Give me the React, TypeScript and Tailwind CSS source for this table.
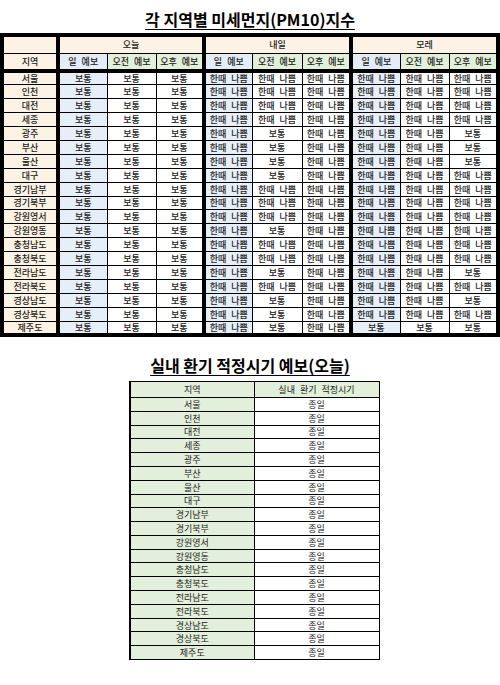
import React from 'react';

// 미세먼지(PM10) 예보 표 + 실내 환기 표
const FONT = { fontFamily: '"Noto Sans CJK KR", "Noto Sans", sans-serif' };

const H = '한때 나쁨';
const B = '보통';

type Row = { name: string; tomorrow: string[]; after: string[] };

const rows: Row[] = [
  { name: '서울', tomorrow: [H, H, H], after: [H, H, H] },
  { name: '인천', tomorrow: [H, H, H], after: [H, H, H] },
  { name: '대전', tomorrow: [H, H, H], after: [H, H, H] },
  { name: '세종', tomorrow: [H, H, H], after: [H, H, H] },
  { name: '광주', tomorrow: [H, B, H], after: [H, H, B] },
  { name: '부산', tomorrow: [H, B, H], after: [H, H, B] },
  { name: '울산', tomorrow: [H, B, H], after: [H, H, B] },
  { name: '대구', tomorrow: [H, B, H], after: [H, H, H] },
  { name: '경기남부', tomorrow: [H, H, H], after: [H, H, H] },
  { name: '경기북부', tomorrow: [H, H, H], after: [H, H, H] },
  { name: '강원영서', tomorrow: [H, H, H], after: [H, H, H] },
  { name: '강원영동', tomorrow: [H, B, H], after: [H, H, H] },
  { name: '충청남도', tomorrow: [H, H, H], after: [H, H, H] },
  { name: '충청북도', tomorrow: [H, H, H], after: [H, H, H] },
  { name: '전라남도', tomorrow: [H, B, H], after: [H, H, B] },
  { name: '전라북도', tomorrow: [H, H, H], after: [H, H, H] },
  { name: '경상남도', tomorrow: [H, B, H], after: [H, H, B] },
  { name: '경상북도', tomorrow: [H, B, H], after: [H, H, H] },
  { name: '제주도', tomorrow: [H, B, H], after: [B, B, B] },
];

const colWidths = [56, 49, 49, 48, 48, 50, 49, 49, 49, 49];
const subHeads = ['일 예보', '오전 예보', '오후 예보'];

function Title({ children }: { children: React.ReactNode }) {
  return (
    <div className="flex justify-center">
      <h1 className="text-[16px] leading-none font-bold text-black underline underline-offset-[3px] decoration-1">
        {children}
      </h1>
    </div>
  );
}

function GroupCells({ values }: { values: string[] }) {
  return (
    <>
      {values.map((v, i) => (
        <td
          key={i}
          className={`border border-black text-center ${i === 0 ? 'border-l-4 bg-[#e6eef8]' : 'bg-white'}`}
        >
          {v}
        </td>
      ))}
    </>
  );
}

function DustTable() {
  const allB = [B, B, B];
  return (
    <table className="w-[500px] table-fixed border-collapse border-4 border-black text-[9px] leading-none font-medium text-[#222] [word-spacing:3px]">
      <colgroup>
        {colWidths.map((w, i) => (
          <col key={i} style={{ width: w }} />
        ))}
      </colgroup>
      <thead>
        <tr className="h-[18px] bg-[#fdf3e4]">
          <th className="border border-black border-r-4 font-medium"></th>
          <th colSpan={3} className="border border-black border-l-4 font-medium">오늘</th>
          <th colSpan={3} className="border border-black border-l-4 font-medium">내일</th>
          <th colSpan={3} className="border border-black border-l-4 font-medium">모레</th>
        </tr>
        <tr className="h-[18px]">
          <th className="border border-black border-b-4 border-r-4 bg-[#fdf3e4] font-medium">지역</th>
          {[0, 1, 2].map((g) =>
            subHeads.map((s, i) => (
              <th
                key={`${g}-${i}`}
                className={`border border-black border-b-4 font-medium ${
                  i === 0 ? 'border-l-4 bg-[#e3ecf7]' : 'bg-[#e2f0d9]'
                }`}
              >
                {s}
              </th>
            ))
          )}
        </tr>
      </thead>
      <tbody>
        {rows.map((r) => (
          <tr key={r.name} className="h-[13.9px]">
            <td className="border border-black border-r-4 bg-[#fdf3e4] text-center">{r.name}</td>
            <GroupCells values={allB} />
            <GroupCells values={r.tomorrow} />
            <GroupCells values={r.after} />
          </tr>
        ))}
      </tbody>
    </table>
  );
}

function VentTable() {
  return (
    <table className="w-[249px] table-fixed border-collapse border border-black text-[9px] leading-none text-[#222] [word-spacing:3px]">
      <colgroup>
        <col style={{ width: 124 }} />
        <col style={{ width: 125 }} />
      </colgroup>
      <thead>
        <tr className="h-[16px] bg-[#e2efda]">
          <th className="border border-black border-l-2 font-normal">지역</th>
          <th className="border border-black font-normal">실내 환기 적정시기</th>
        </tr>
      </thead>
      <tbody>
        {rows.map((r) => (
          <tr key={r.name} className="h-[13.8px]">
            <td className="border border-black border-l-2 bg-[#e2efda] text-center">{r.name}</td>
            <td className="border border-black bg-white text-center">종일</td>
          </tr>
        ))}
      </tbody>
    </table>
  );
}

export default function App() {
  return (
    <div className="w-[500px] h-[685px] bg-white" style={FONT}>
      <div className="pt-[11px] h-[33px]">
        <Title>각 지역별 미세먼지(PM10)지수</Title>
      </div>
      <DustTable />
      <div className="pt-[20px] h-[44px]">
        <Title>실내 환기 적정시기 예보(오늘)</Title>
      </div>
      <div className="pl-[129px]">
        <VentTable />
      </div>
    </div>
  );
}
